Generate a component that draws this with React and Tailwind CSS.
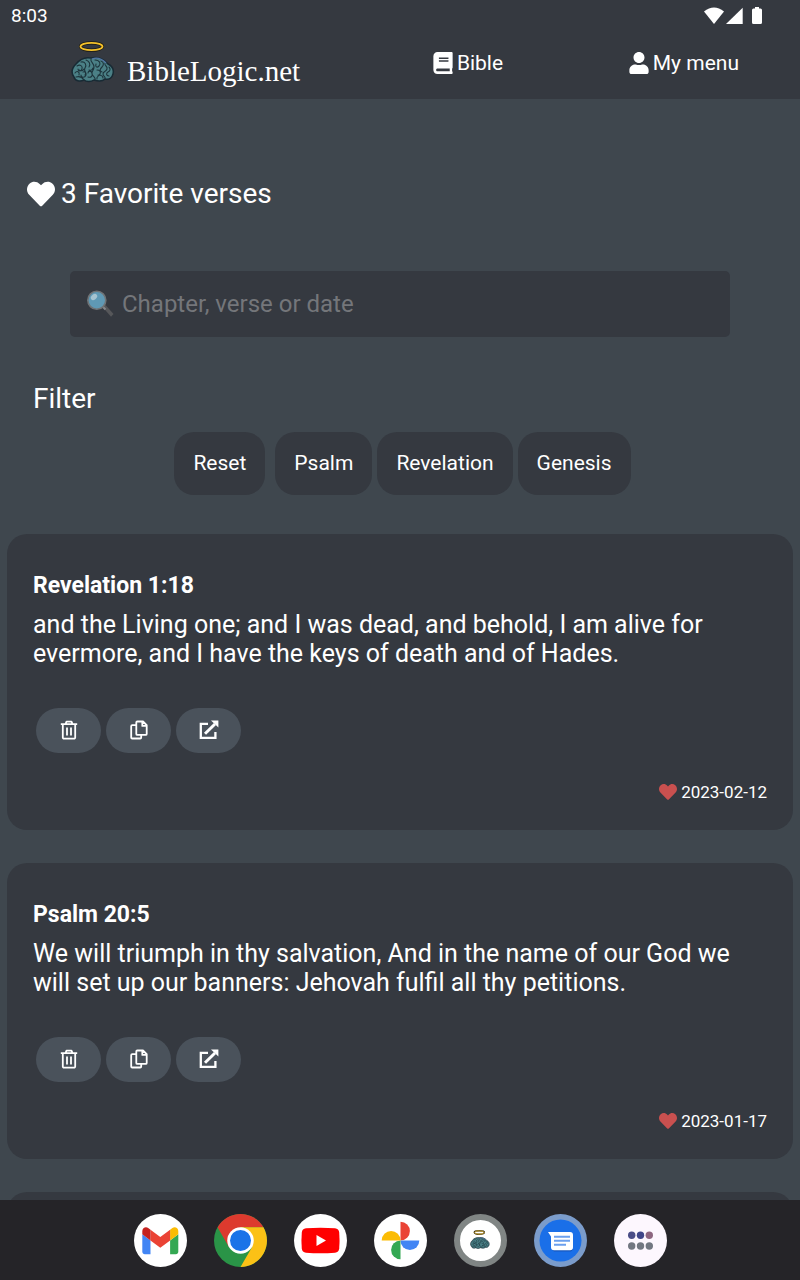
import { FaBook, FaHeart, FaUser } from "react-icons/fa";

const verses = [
  {
    ref: "Revelation 1:18",
    text: "and the Living one; and I was dead, and behold, I am alive for evermore, and I have the keys of death and of Hades.",
    date: "2023-02-12",
  },
  {
    ref: "Psalm 20:5",
    text: "We will triumph in thy salvation, And in the name of our God we will set up our banners: Jehovah fulfil all thy petitions.",
    date: "2023-01-17",
  },
];

function Brain({ className }) {
  return (
    <svg viewBox="0 0 44 42" className={className} aria-hidden="true">
      <ellipse cx="20.500" cy="5.500" rx="11" ry="3.700" fill="none" stroke="#1c1a14" strokeWidth="3.200" />
      <ellipse cx="20.500" cy="5.500" rx="11" ry="3.700" fill="none" stroke="#f5c22b" strokeWidth="1.800" />
      <path
        d="M3 36C0 32 1 27 5 23C9 18 15 16 20 17C27 15 34 19 37 23C41 25 43 29 42 33C41 37 38 39 34 38C31 41 26 40 23 39C20 41 15 41 13 39C9 41 4 40 3 36Z"
        fill="#4b8086"
        stroke="#182a34"
        strokeWidth="1.500"
      />
      <g fill="none" stroke="#1d343c" strokeWidth="1.100" strokeLinecap="round" transform="translate(0 1)">
        <path d="M4 31c2-3 5-1 4 2M6 24c3-2 6 0 5 3s-4 2-4 0M10 20c4-1 6 3 4 6s2 4 1 7-5 3-5 0M15 18c3 1 5 4 3 7M5 35c3-1 6 0 8 3M17 35c3 1 5-1 4-4s-4-2-4 0M20 17c-1 3 3 4 3 8s-3 4-2 7 4 3 3 6M24 18c5 0 6 4 4 6s-4 1-3-2M30 19c3 1 3 4 1 6s-3 4 0 5M26 28c3 0 4 2 3 4s-4 3-3 5M34 21c-1 3 3 3 2 6s-4 2-4 5 3 2 2 5M38 25c2 2 1 4-1 5s-2 4 1 4M12 30c3-1 3 2 2 3M27 33c3 0 5 1 5 3M8 28c2 1 4 1 5-1M18 28c2 1 3 0 4-2" />
      </g>
      <path d="M21 18c5-2 10 0 14 4" fill="none" stroke="#5377a5" strokeWidth="1.200" />
    </svg>
  );
}

function MagnifierIcon() {
  return (
    <svg viewBox="0 0 28 28" className="size-7 shrink-0" aria-hidden="true">
      <path d="M17 17.500l2.500-2.500 8 9-2.500 2.800z" fill="#56575a" />
      <path d="M15.500 15.500l4 4" stroke="#85888b" strokeWidth="2" />
      <circle cx="10.800" cy="10.300" r="9" fill="#5f99b5" stroke="#6f7376" strokeWidth="1.600" />
      <ellipse cx="8" cy="7" rx="3.600" ry="2.500" transform="rotate(-40 8 7)" fill="#a6c3d0" />
    </svg>
  );
}

function TrashIcon() {
  return (
    <svg viewBox="0 0 20 20" className="size-5" fill="none" stroke="#fff" strokeWidth="1.800" strokeLinejoin="round" aria-hidden="true">
      <path d="M1.800 4.200h16.400M6.500 4.200l1-2.500h5l1 2.500M3.800 4.200V17.500a1.200 1.200 0 0 0 1.200 1.200h10a1.200 1.200 0 0 0 1.200-1.200V4.200M8 7.500v8M12 7.500v8" />
    </svg>
  );
}

function CopyIcon() {
  return (
    <svg viewBox="0 0 20 20" className="size-5" fill="none" stroke="#fff" strokeWidth="1.800" strokeLinejoin="round" aria-hidden="true">
      <path d="M8.300 1.500h5.700l3.700 3.700v8.700a1 1 0 0 1-1 1H8.300a1 1 0 0 1-1-1V2.500a1 1 0 0 1 1-1zM13.300 1.700v4.200h4.200M7.300 5.200H3.200a1 1 0 0 0-1 1v11.300a1 1 0 0 0 1 1h8a1 1 0 0 0 1-1v-2.600" />
    </svg>
  );
}

function OpenIcon() {
  return (
    <svg viewBox="0 0 20 20" className="size-5" fill="none" stroke="#fff" aria-hidden="true">
      <path d="M9 3.800H1.800v14h14.600V12" strokeWidth="2.300" />
      <path d="M6 13.800L16 4" strokeWidth="3" />
      <path d="M12 .6h7.400v7z" fill="#fff" stroke="none" />
    </svg>
  );
}

function RoundButton({ label, children }) {
  return (
    <button type="button" aria-label={label} className="flex h-[45px] w-[65px] items-center justify-center rounded-full bg-[#4a525b] pb-[2px]">
      {children}
    </button>
  );
}

function FilterButton({ children }) {
  return (
    <button type="button" className="h-[63px] rounded-[20px] bg-[#353940] px-[19px] pb-[2px]">
      {children}
    </button>
  );
}

function VerseCard({ verse }) {
  return (
    <article className="rounded-[20px] bg-[#353940] px-[26px] pt-[37px] pb-6">
      <h2 className="text-[23px] leading-[30px] font-bold">{verse.ref}</h2>
      <p className="mt-[9px] text-[25px] leading-[29px]">{verse.text}</p>
      <div className="mt-10 flex gap-[5px] pl-[3px]">
        <RoundButton label="Delete"><TrashIcon /></RoundButton>
        <RoundButton label="Copy"><CopyIcon /></RoundButton>
        <RoundButton label="Open"><OpenIcon /></RoundButton>
      </div>
      <p className="mt-[25px] flex items-center justify-end gap-1 text-[17px] leading-[28px]">
        <FaHeart className="size-[18px] text-[#c9504f]" />
        <time>{verse.date}</time>
      </p>
    </article>
  );
}

function StatusBar() {
  return (
    <div className="flex h-8 items-center justify-between pr-9 pl-[11px]">
      <span className="text-[19px] leading-8">8:03</span>
      <svg viewBox="0 0 60 20" className="h-5 w-15" fill="#fff" aria-hidden="true">
        <path d="M0 5.500Q10-2.500 20 5.500L10 18z" />
        <path d="M38.700 1.800V18H22z" />
        <path d="M51 1h4v1.500h1.500A1.500 1.500 0 0 1 58 4v12.500a1.500 1.500 0 0 1-1.500 1.500h-7A1.500 1.500 0 0 1 48 16.500V4A1.500 1.500 0 0 1 49.500 2.500H51z" />
      </svg>
    </div>
  );
}

function GmailIcon() {
  return (
    <svg viewBox="0 0 53 53" className="size-full" aria-hidden="true">
      <circle cx="26.500" cy="26.500" r="26.500" fill="#fff" />
      <g transform="translate(8.300 13.300) scale(.409) translate(-52 -42)">
        <path fill="#4285f4" d="M58 108h14V74L52 59v43c0 3.320 2.690 6 6 6" />
        <path fill="#34a853" d="M120 108h14c3.320 0 6-2.690 6-6V59l-20 15" />
        <path fill="#fbbc04" d="M120 48v26l20-15v-8c0-7.420-8.470-11.650-14.400-7.200" />
        <path fill="#ea4335" d="M72 74V48l24 18 24-18v26L96 92" />
        <path fill="#c5221f" d="M52 51v8l20 15V48l-5.600-4.200c-5.940-4.450-14.400-.22-14.400 7.200" />
      </g>
    </svg>
  );
}

function ChromeIcon() {
  return (
    <svg viewBox="0 0 48 48" className="size-full" aria-hidden="true">
      <circle cx="24" cy="24" r="24" fill="#2a9447" />
      <path d="M3.220 12A24 24 0 0 1 44.780 12H24L13.600 30z" fill="#dd3a2e" />
      <path d="M44.780 12A24 24 0 0 1 24 48L34.400 30 24 12z" fill="#fbc116" />
      <circle cx="24" cy="24" r="12" fill="#fff" />
      <circle cx="24" cy="24" r="9.500" fill="#1a73e8" />
    </svg>
  );
}

function YoutubeIcon() {
  return (
    <svg viewBox="0 0 53 53" className="size-full" aria-hidden="true">
      <circle cx="26.500" cy="26.500" r="26.500" fill="#fff" />
      <path d="M12 14.300q14.500-1.200 29 0 3.800.4 4.200 4.200.7 8 0 16-.4 3.800-4.200 4.200-14.500 1.200-29 0-3.800-.4-4.200-4.200-.7-8 0-16 .4-3.800 4.200-4.200z" fill="#f00" />
      <path d="M22.500 21l9.500 5.500-9.500 5.500z" fill="#fff" />
    </svg>
  );
}

function PhotosIcon() {
  return (
    <svg viewBox="0 0 53 53" className="size-full" aria-hidden="true">
      <circle cx="26.500" cy="26.500" r="26.500" fill="#fff" />
      <path d="M26.500 7.700a9.400 9.400 0 0 1 0 18.800z" fill="#ea4335" />
      <path d="M45.300 26.500a9.400 9.400 0 0 1-18.800 0z" fill="#4285f4" />
      <path d="M26.500 45.300a9.400 9.400 0 0 1 0-18.800z" fill="#34a853" />
      <path d="M7.700 26.500a9.400 9.400 0 0 1 18.800 0z" fill="#fbbc04" />
    </svg>
  );
}

function BibleAppIcon() {
  return (
    <span className="flex size-full items-center justify-center rounded-full border-[6px] border-[#808584] bg-white">
      <Brain className="w-5" />
    </span>
  );
}

function MessagesIcon() {
  return (
    <svg viewBox="0 0 53 53" className="size-full" aria-hidden="true">
      <circle cx="26.500" cy="26.500" r="26.500" fill="#7b9ccb" />
      <circle cx="26.500" cy="26.500" r="21" fill="#1a6fe8" />
      <path d="M18 35.500l2 2h17l2.500-2.500z" fill="#1657bd" />
      <path d="M14 18h22a3 3 0 0 1 3 3v12.300a3 3 0 0 1-3 3H20a3 3 0 0 1-3-3V22.500z" fill="#fff" />
      <path d="M20 22.800h16M20 26.800h16M20 30.800h12" stroke="#6ba0ee" strokeWidth="2" />
    </svg>
  );
}

function AllAppsIcon() {
  return (
    <svg viewBox="0 0 53 53" className="size-full" aria-hidden="true">
      <circle cx="26.500" cy="26.500" r="26.500" fill="#fdf7fe" />
      <g fill="#727781">
        <circle cx="17.700" cy="32" r="3.700" />
        <circle cx="26.500" cy="32" r="3.700" />
        <circle cx="35.300" cy="32" r="3.700" />
      </g>
      <circle cx="17.700" cy="21.300" r="3.700" fill="#4a4d87" />
      <circle cx="26.500" cy="21.300" r="3.700" fill="#3f4689" />
      <circle cx="35.300" cy="21.300" r="3.700" fill="#8d6680" />
    </svg>
  );
}

const dock = [
  ["Gmail", GmailIcon],
  ["Chrome", ChromeIcon],
  ["YouTube", YoutubeIcon],
  ["Photos", PhotosIcon],
  ["BibleLogic.net", BibleAppIcon],
  ["Messages", MessagesIcon],
  ["All apps", AllAppsIcon],
];

export default function App() {
  return (
    <div className="flex h-screen flex-col bg-[#3f474e] font-[Roboto,sans-serif] text-white">
      <header className="shrink-0 bg-[#353940]">
        <StatusBar />
        <nav className="grid h-[67px] grid-cols-[47fr_23fr_30fr] items-start">
          <a href="#home" className="flex items-start gap-3 pt-[9px] pl-[71px]">
            <Brain className="w-[44px] shrink-0" />
            <span className="pt-[14px] font-['Liberation_Serif',serif] text-[29px] leading-8">BibleLogic.net</span>
          </a>
          <a href="#bible" className="flex items-center justify-center gap-1 pt-[15px] text-[21px] leading-8">
            <FaBook className="h-[22px] w-5" />
            Bible
          </a>
          <a href="#menu" className="flex items-center justify-end gap-1 pt-[15px] pr-[61px] text-[21px] leading-8">
            <FaUser className="h-[22px] w-5" />
            My menu
          </a>
        </nav>
      </header>

      <main className="min-h-0 flex-1 overflow-y-auto px-[7px] [scrollbar-width:none]">
        <h1 className="mt-[75px] flex items-center gap-[6px] pl-5 text-[28px] leading-10">
          <FaHeart className="size-7" />
          3 Favorite verses
        </h1>

        <label className="mx-[63px] mt-[57px] flex h-[66px] items-center gap-2 rounded-[5px] bg-[#353940] px-4">
          <MagnifierIcon />
          <input
            type="search"
            aria-label="Search favorite verses"
            placeholder="Chapter, verse or date"
            className="min-w-0 flex-1 bg-transparent text-[24px] leading-8 outline-none placeholder:text-[#74767a]"
          />
        </label>

        <h2 className="mt-[42px] pl-[26px] text-[28px] leading-10">Filter</h2>
        <div className="mt-[13px] flex justify-center gap-[5px] pl-[5px] text-[21px] leading-8">
          <div className="mr-[5px] flex">
            <FilterButton>Reset</FilterButton>
          </div>
          <FilterButton>Psalm</FilterButton>
          <FilterButton>Revelation</FilterButton>
          <FilterButton>Genesis</FilterButton>
        </div>

        <div className="mt-[39px] flex flex-col gap-[33px]">
          {verses.map((verse) => (
            <VerseCard key={verse.ref} verse={verse} />
          ))}
          <article className="h-16 rounded-[20px] bg-[#353940]" />
        </div>
      </main>

      <footer className="flex h-20 shrink-0 items-center justify-center gap-[27px] bg-[#252428]">
        {dock.map(([name, Icon]) => (
          <button key={name} type="button" aria-label={name} className="size-[53px]">
            <Icon />
          </button>
        ))}
      </footer>
    </div>
  );
}
